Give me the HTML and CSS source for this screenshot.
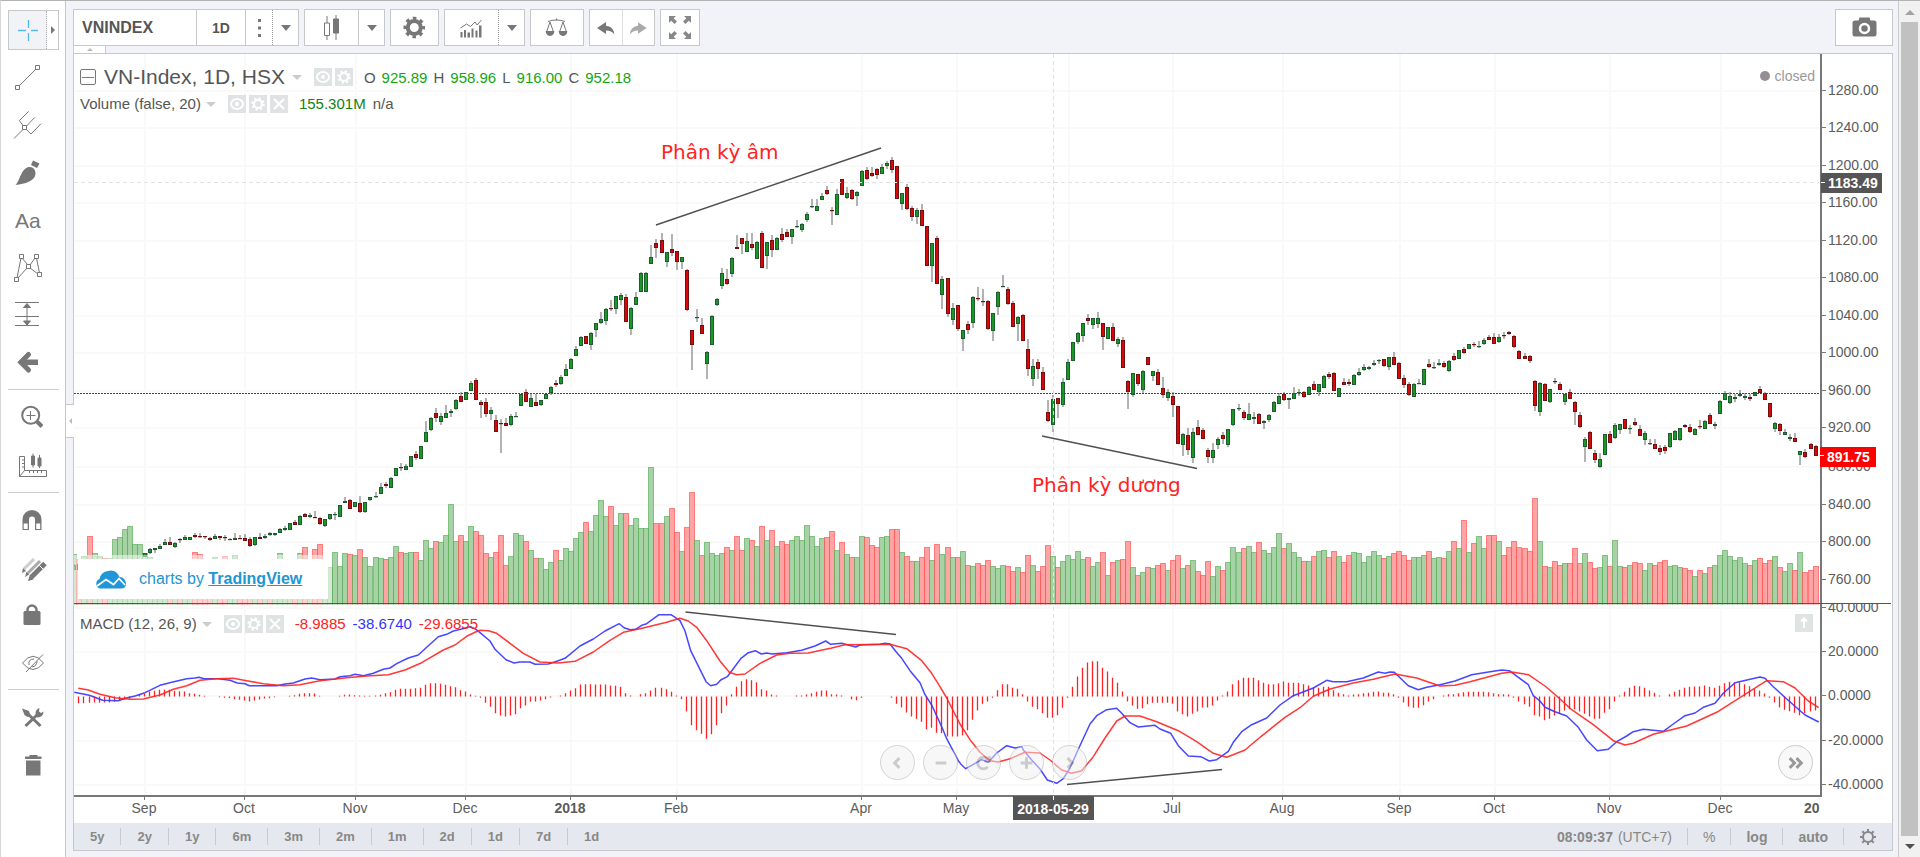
FILE: index.html
```html
<!DOCTYPE html>
<html lang="en">
<head>
<meta charset="utf-8">
<title>VNINDEX</title>
<link rel="stylesheet" href="styles.css">
</head>
<body>
<div class="app">
  <nav class="tools" aria-label="Drawing tools">
    <div class="tool-active">
      <button class="tool-current" aria-label="Cross"><svg class="icon" viewBox="9 11 37 38"><path d="M28.500 20v8M28.500 33v8M18 30.500h8M31 30.500h7" fill="none" stroke="#56b7ee" stroke-width="1.300"/></svg></button>
      <button class="tool-more" aria-label="More cursors"><span class="arrow-right"></span></button>
    </div>
    <button class="tool" aria-label="Trend line"><svg class="icon line" viewBox="8 56 51 47"><path d="M19 86 36 69M35.500 65.500h4v4h-4zM15.500 85.500h4v4h-4z"/></svg></button>
    <button class="tool" aria-label="Pitchfork"><svg class="icon line" viewBox="8 103 51 47"><path d="M14 138.500 23 129.500M26.500 126 34.700 117.500M23.500 126 19.300 120.700 28.700 111.300M26.300 129.500 31 134 41 123.700M22.500 125.500h4v4h-4z"/></svg></button>
    <button class="tool" aria-label="Brush"><svg class="icon solid" viewBox="8 150 51 47"><path d="M15.500 185C20 181 21 168 29 167 33 166.500 36 170 35.500 174 35 181 25 184 15.500 185zM33 160.500 39.500 163.500 37 168 31 165z"/></svg></button>
    <button class="tool" aria-label="Text"><svg class="icon solid" viewBox="8 197 51 47"><text class="tool-text" x="15" y="228">Aa</text></svg></button>
    <button class="tool" aria-label="Pattern"><svg class="icon line" viewBox="8 244 51 47"><path d="M21 258 17 278M22 258 28 265M35 258 30 265M36.500 258 39.500 273M27 268 18 278M30 268 38 274"/><path d="M19.500 254.500h4v4h-4zM34.500 254.500h4v4h-4zM26.500 264.500h4v4h-4zM14.500 277.500h4v4h-4zM37.500 272.500h4v4h-4z"/></svg></button>
    <button class="tool" aria-label="Position"><svg class="icon line" viewBox="8 291 51 47"><path d="M15 302.500h24M15 316.500h24M15 325.500h24M27 304v21"/><path class="solid" d="M27 303.500l3.500 4h-7zM27 325l3.500-4h-7z"/></svg></button>
    <button class="tool" aria-label="Arrow"><svg class="icon" viewBox="8 338 51 47"><path d="M28.500 354.500 21 362.300 28.500 370" fill="none" stroke="#777" stroke-width="5" stroke-linecap="round"/><path class="solid" d="M17.500 362.300 26 354V370zM22 359.500H38v5.500H22z"/></svg></button>
    <hr class="rule">
    <button class="tool" aria-label="Zoom in"><svg class="icon line" viewBox="8 394 51 47"><circle cx="30.700" cy="415.300" r="8.500" stroke-width="2"/><path d="M26.500 415.500h9M30.500 411v9"/><path d="M37 421.500 42 426.500" stroke-width="4"/></svg></button>
    <button class="tool" aria-label="Measure"><svg class="icon line" viewBox="8 441 51 47"><path d="M19.500 456.500h5v14h22v6h-27zM19.500 476.500l5-6M22 460h2M22 463.500h2M22 467h2M29.500 471v2M33.500 471v2M37.500 471v2M41.500 471v2"/><path class="solid" d="M31.500 456h3v9h-3zM33 453.500v14M38 458h3v8h-3zM39.500 455v13"/></svg></button>
    <hr class="rule">
    <button class="tool" aria-label="Magnet"><svg class="icon solid" viewBox="8 497 51 47"><path d="M22.500 530V519.500a9.500 9.500 0 0 1 19 0V530h-6.500V519.500a3 3 0 0 0-6 0V530z"/><path d="M23.700 523.500h4V529h-4zM36.200 523.500h4V529h-4z" fill="#fff"/></svg></button>
    <button class="tool" aria-label="Keep drawing"><svg class="icon" viewBox="8 544 51 47"><g fill="none" stroke-width="3"><path d="M24 569 34 559" stroke="#ccc"/><path d="M27 574 40 561" stroke="#aaa"/><path d="M31 577.500 45 563.500" stroke="#777" stroke-width="5"/></g><path d="M22 573l1-5 3 3zM25 577l1.500-5 2.500 2.500zM28 581l1.500-5 4 3.500z" fill="#777"/><path d="M39.500 565.500l4 4" stroke="#fff"/></svg></button>
    <button class="tool" aria-label="Lock"><svg class="icon solid" viewBox="8 591 51 47"><rect x="23.500" y="611" width="17" height="14" rx="1.500"/><path d="M27.500 612v-2a4.500 4.500 0 0 1 9 0v2" fill="none" stroke="#777" stroke-width="2.500"/></svg></button>
    <button class="tool" aria-label="Hide"><svg class="icon line" viewBox="8 638 51 47"><path d="M22.500 663Q33 649.500 43.500 663 33 676 22.500 663zM43 654.500 26 672M29 665q-1-6 5-6M37 661q0 5-5 6"/></svg></button>
    <hr class="rule">
    <button class="tool" aria-label="Settings"><svg class="icon" viewBox="8 694 51 47"><path d="M28 714 40.500 726M25.500 726 38 714" fill="none" stroke="#777" stroke-width="3"/><path class="solid" d="M22 708.500l7 2.500 1.500 5-3 1-3-2zM36 716q-2-6 3.500-8l-.5 3.500 2 1.500 2.500-1.500q0 5.500-6 6z"/></svg></button>
    <button class="tool" aria-label="Remove"><svg class="icon solid" viewBox="8 741 51 47"><path d="M25 756.500h4.500V755h8v1.500H41.500v2.500H25zM26 760.500h14.500V775.500H26z"/></svg></button>
  </nav>

  <main class="main">
    <header class="toolbar">
      <div class="toolbar-left">
        <div class="join">
          <input class="symbol" type="text" value="VNINDEX" aria-label="Symbol">
          <div class="box">
            <button class="btn interval">1D</button>
            <button class="btn favs" aria-label="Favourites"><svg class="icon solid" viewBox="246 10 26 35"><path d="M258 19h3v3h-3zM258 26.500h3v3h-3zM258 34h3v3h-3z"/></svg></button>
            <button class="btn drop dotted" aria-label="Intervals"><span class="caret"></span></button>
          </div>
        </div>
        <div class="box">
          <button class="btn style" aria-label="Candles"><svg class="icon line" viewBox="305 10 53 35"><path d="M324.500 23h5v12.500h-5zM327 16v7M327 36v4"/><path class="solid" d="M333.500 19h5v14h-5zM336 15v25"/></svg></button>
          <button class="btn drop solid-edge" aria-label="Chart styles"><span class="caret"></span></button>
        </div>
        <button class="box wide" aria-label="Properties"><svg class="icon line" viewBox="391 10 47 35"><circle cx="414.300" cy="27.500" r="6.500" stroke-width="4"/><circle cx="414.300" cy="27.500" r="9.300" stroke-width="3" stroke-dasharray="3.600 3.704" stroke-dashoffset="1.800"/></svg></button>
        <div class="box">
          <button class="btn style" aria-label="Indicators"><svg class="icon line" viewBox="445 10 52 35"><path d="M460 28 466 24 470 26.500 474.500 22 476.500 25 481 20"/><path class="solid" stroke="none" d="M460 32h2v5.500h-2zM463.500 30h2v7.500h-2zM467 32.500h2.500v5H467zM471 28.500h2v9h-2zM475 30.500h2v7h-2zM478.500 25.500h2.500v12h-2.500z"/></svg></button>
          <button class="btn drop dotted" aria-label="Favourite indicators"><span class="caret"></span></button>
        </div>
        <button class="box compare" aria-label="Compare"><svg class="icon line" viewBox="530 10 52 35"><path d="M547 21.500q4-1.500 8.500-1.500t8.500 1.500M555.500 18.500v2M549 22 545.500 32M549 22 552.500 32M562 22 558.500 32M562 22 565.500 32"/><path class="solid" d="M545 31.500h8q-.5 4-4 4t-4-4zM558 31.500h8q-.5 4-4 4t-4-4z"/></svg></button>
        <div class="box undo">
          <button class="btn half" aria-label="Undo"><svg class="icon solid" viewBox="589 10 32 35"><path d="M596 28 605 22v3.800q7.500.7 8.500 8.700-3-4-8.500-4V34z"/></svg></button>
          <button class="btn half redo" aria-label="Redo"><svg class="icon" viewBox="621 10 32 35"><path fill="#aaa" d="M645.500 28 636.500 22v3.800q-7.500.7-8.500 8.700 3-4 8.500-4V34z"/></svg></button>
        </div>
        <button class="box full" aria-label="Fullscreen"><svg class="icon" viewBox="661 10 38 35"><path fill="#888" d="M669 16h7l-2.300 2.300 3.300 3.300-2.500 2.500-3.300-3.300L669 23zM691 16h-7l2.300 2.300-3.300 3.300 2.500 2.500 3.300-3.300L691 23zM669 39h7l-2.300-2.300 3.300-3.300-2.500-2.500-3.300 3.300L669 32zM691 39h-7l2.300-2.300-3.300-3.300 2.500-2.500 3.300 3.300L691 32z"/></svg></button>
      </div>
      <button class="box camera" aria-label="Take a snapshot"><svg class="icon solid" viewBox="1836 10 56 35"><path d="M1855 20.500h3.500l1-3h10l1 3h3.500a2.500 2.500 0 0 1 2.500 2.500v11a2.500 2.500 0 0 1-2.500 2.500h-19a2.500 2.500 0 0 1-2.500-2.500v-11a2.500 2.500 0 0 1 2.500-2.500z"/><circle cx="1864.500" cy="28.500" r="4.500" stroke="#fff" stroke-width="2.500"/></svg></button>
    </header>

    <div class="tab-strip"><button class="tab-top" aria-label="Hide toolbar"></button></div>
    <section class="frame">
      <button class="tab-side" aria-label="Hide drawing tools"></button>
      <div class="chart">
        <svg class="plot" id="plot" viewBox="74 54 1818 769" role="img" aria-label="VN-Index price, volume and MACD"></svg>

        <div class="legend legend-main">
          <div class="row row-title">
            <button class="fold" aria-label="Collapse"></button>
            <span class="title">VN-Index, 1D, HSX</span><span class="caret pale"></span>
            <span class="minis"><button class="mini" aria-label="Hide"><svg viewBox="0 0 18 18"><use href="#eye"/></svg></button><button class="mini" aria-label="Format"><svg viewBox="0 0 18 18"><use href="#cog"/></svg></button></span>
            <span class="ohlc"><span>O</span><b>925.89</b><span>H</span><b>958.96</b><span>L</span><b>916.00</b><span>C</span><b>952.18</b></span>
          </div>
          <div class="row row-study">
            <span>Volume (false, 20)</span><span class="caret pale"></span>
            <span class="minis"><button class="mini" aria-label="Hide"><svg viewBox="0 0 18 18"><use href="#eye"/></svg></button><button class="mini" aria-label="Format"><svg viewBox="0 0 18 18"><use href="#cog"/></svg></button><button class="mini" aria-label="Remove"><svg viewBox="0 0 18 18"><use href="#ex"/></svg></button></span>
            <span class="vol">155.301M</span><span>n/a</span>
          </div>
        </div>

        <div class="status"><i class="dot"></i>closed</div>

        <div class="brand">
          <svg class="cloud" viewBox="0 0 31 19"><path fill="#2196d8" d="M5 18.500A5 5 0 0 1 4.500 9 10 10 0 0 1 13 1q8-2 11.500 6 6 .500 6.500 6.500 0 5-5 5z"/><path d="M2 16 11 9.500l7.500 5L24 8.500 30 15" fill="none" stroke="#fff" stroke-width="1.800"/></svg>
          <span>charts by <a href="#">TradingView</a></span>
        </div>

        <div class="legend legend-macd">
          <div class="row row-study">
            <span>MACD (12, 26, 9)</span><span class="caret pale"></span>
            <span class="minis"><button class="mini" aria-label="Hide"><svg viewBox="0 0 18 18"><use href="#eye"/></svg></button><button class="mini" aria-label="Format"><svg viewBox="0 0 18 18"><use href="#cog"/></svg></button><button class="mini" aria-label="Remove"><svg viewBox="0 0 18 18"><use href="#ex"/></svg></button></span>
            <span class="red">-8.9885</span><span class="blue">-38.6740</span><span class="red">-29.6855</span>
          </div>
        </div>
        <button class="mini move-up" aria-label="Move up"><svg viewBox="0 0 18 18"><path d="M9 14V5M6 7.500 9 4.500l3 3" fill="none" stroke="#fff" stroke-width="2"/></svg></button>

        <div class="nav">
          <button class="round" aria-label="Scroll left"><svg viewBox="0 0 34 34"><path d="M19 12l-5 5 5 5"/></svg></button>
          <button class="round" aria-label="Zoom out"><svg viewBox="0 0 34 34"><path d="M12 17h11"/></svg></button>
          <button class="round" aria-label="Reset"><svg viewBox="0 0 34 34"><path d="M21.500 21a6 6 0 1 1 0-8M23 10v5h-5"/></svg></button>
          <button class="round" aria-label="Zoom in"><svg viewBox="0 0 34 34"><path d="M11 17h12M17 11v12"/></svg></button>
          <button class="round" aria-label="Scroll right"><svg viewBox="0 0 34 34"><path d="M15 12l5 5-5 5"/></svg></button>
        </div>
        <button class="round latest" aria-label="Scroll to latest"><svg viewBox="0 0 34 34"><path d="M11 12l5 5-5 5M18 12l5 5-5 5"/></svg></button>
      </div>

      <footer class="footer">
        <div class="cells"><button>5y</button><button>2y</button><button>1y</button><button>6m</button><button>3m</button><button>2m</button><button>1m</button><button>2d</button><button>1d</button><button>7d</button><button>1d</button></div>
        <div class="cells cells-right"><button>08:09:37 <span class="zone">(UTC+7)</span></button><button class="percent">%</button><button>log</button><button>auto</button><button aria-label="Scale settings"><svg class="sun" viewBox="0 0 18 18"><circle cx="9" cy="9" r="5"/><path d="M9 1v3M9 14v3M1 9h3M14 9h3M3.300 3.300l2.200 2.200M12.500 12.500l2.200 2.200M3.300 14.700l2.200-2.200M12.500 5.500l2.200-2.200"/></svg></button></div>
      </footer>
    </section>
  </main>

  <aside class="scroll" aria-hidden="true"><span class="scroll-up"></span><span class="thumb"></span><span class="scroll-down"></span></aside>
</div>

<svg class="defs" aria-hidden="true"><defs>
  <g id="eye"><ellipse cx="9" cy="9" rx="6" ry="5" fill="none" stroke="#fff" stroke-width="2"/><circle cx="9" cy="9" r="2" fill="#fff"/></g>
  <g id="cog" fill="none" stroke="#fff"><circle cx="9" cy="9" r="4" stroke-width="2"/><circle cx="9" cy="9" r="5.700" stroke-width="2" stroke-dasharray="2.200 2.277"/></g>
  <g id="ex"><path d="M4 4l10 10M14 4 4 14" stroke="#fff" stroke-width="2"/></g>
</defs></svg>
<script src="chart.js"></script>
</body>
</html>
```
FILE: styles.css
```css
* { box-sizing: border-box; }
body { margin: 0; font-family: "Liberation Sans", Arial, sans-serif; color: #555; background: #f1f3f8; }
button, input { font: inherit; color: inherit; margin: 0; padding: 0; border: 0; background: none; border-radius: 0; }
button { display: flex; align-items: center; justify-content: center; }
.defs { position: absolute; width: 0; height: 0; }
.app { display: flex; min-height: 100vh; border-top: 1px solid #b3b3b3; border-left: 1px solid #d8d8d8; }
.icon { display: block; width: 100%; height: 100%; }
.line { fill: none; stroke: #777; }
.solid { fill: #777; }

.tools { flex: none; width: 65px; padding: 9px 6px 0 7px; background: #fff; border-right: 1px solid #c6c6c6; }
.tool-active { display: flex; height: 40px; margin-bottom: 6px; border: 1px solid #c6c8ca; }
.tool-current { width: 38px; background: #f2f3f6; border-right: 1px dotted #aaa; }
.tool-more { flex: 1; }
.arrow-right { border: 4px solid transparent; border-left-color: #777; border-right: 0; }
.tool { width: 51px; height: 47px; }
.tool-text { font-size: 21px; }
.rule { height: 1px; margin: 4px 0; border: 0; background: #ccc; }

.main { flex: 1; min-width: 0; display: flex; flex-direction: column; padding: 8px 5px 6px 7px; }
.toolbar { display: flex; justify-content: space-between; height: 37px; }
.toolbar-left { display: flex; gap: 5px; }
.join { display: flex; }
.symbol { width: 124px; padding: 0 8px; border: 1px solid #c6c8ca; background: #fff; font-size: 16px; font-weight: bold; margin-right: -1px; }
.box { display: flex; border: 1px solid #c6c8ca; background: #fff; }
.btn { height: 35px; }
.interval { width: 48px; font-size: 14px; font-weight: bold; }
.favs { width: 27px; border-left: 1px solid #c6c8ca; }
.drop { width: 26px; }
.dotted { border-left: 1px dotted #999; }
.solid-edge { border-left: 1px solid #c6c8ca; }
.style { width: 53px; }
.wide { width: 49px; }
.compare { width: 54px; }
.half { width: 32px; }
.undo { width: 66px; }
.redo { border-left: 1px solid #ddd; }
.full { width: 40px; }
.camera { width: 58px; }
.caret { flex: none; border: 5px solid transparent; border-top: 6px solid #777; border-bottom: 0; }
.pale { border-top: 5px solid #ccc; }
.tab-strip { height: 7px; }
.tab-top { width: 33px; height: 7px; background: #fff; border: 1px solid #ccc; border-width: 0 1px; }
.tab-top::after { content: ""; border: 3px solid transparent; border-bottom-color: #bbb; border-top: 0; }

.frame { position: relative; flex: 1; display: flex; flex-direction: column; border: 1px solid #c6c8ca; background: #fff; }
.tab-side { position: absolute; left: -8px; top: 44%; width: 8px; height: 34px; background: #fff; border: 1px solid #c6c8ca; border-width: 1px 0; }
.tab-side::after { content: ""; border: 3px solid transparent; border-right-color: #bbb; border-left: 0; }
.chart { position: relative; flex: 1; }
.plot { display: block; width: 100%; }

.legend { position: absolute; left: 6px; font-size: 15px; line-height: 18px; }
.legend-main { top: 14px; }
.legend-macd { top: 561px; }
.row { display: flex; align-items: center; white-space: nowrap; height: 18px; }
.row-title { margin-bottom: 9px; }
.fold { width: 16px; height: 16px; margin-right: 8px; border: 1px solid #777; border-radius: 2px; }
.fold::after { content: ""; width: 12px; height: 1px; background: #777; }
.title { font-size: 21px; line-height: 18px; margin-right: 7px; }
.minis { display: flex; gap: 3px; margin: 0 11px 0 12px; }
.row-study .caret { margin-left: 5px; }
.vol { color: #128212; margin-right: 7px; }
.mini { width: 18px; height: 18px; background: #e0e3e3; }
.mini svg { width: 18px; height: 18px; }
.ohlc { display: flex; gap: 6px; padding-top: 2px; }
.ohlc b { font-weight: normal; color: #14a514; }
.red { color: #f22; margin-right: 7px; }
.blue { color: #33f; margin-right: 7px; }
.status { position: absolute; right: 77px; top: 13px; display: flex; align-items: center; gap: 5px; font-size: 14px; line-height: 18px; color: #999; }
.dot { width: 10px; height: 10px; border-radius: 50%; background: #958f92; }
.brand { position: absolute; left: 0; top: 501px; display: flex; align-items: center; gap: 13px; width: 258px; height: 48px; padding-left: 17px; border: 4px solid rgba(255,255,255,.5); background: #fff; background-clip: padding-box; font-size: 16px; color: #2196d3; }
.brand a { color: inherit; font-weight: bold; }
.cloud { width: 31px; height: 19px; }
.move-up { position: absolute; right: 79px; top: 560px; }
.nav { position: absolute; left: 0; right: 0; top: 691px; display: flex; justify-content: center; gap: 8px; opacity: .5; }
.round { width: 35px; height: 35px; border: 1px solid #aaa; border-radius: 50%; background: #f1f1f1; }
.round svg { width: 34px; height: 34px; fill: none; stroke: #999; stroke-width: 3; }
.latest { position: absolute; right: 79px; top: 691px; border-color: #ccc; background: #f8f8f8; }

.footer { display: flex; justify-content: space-between; height: 27px; background: #e5e8ee; color: #888; font-size: 13px; font-weight: bold; }
.cells { display: flex; align-items: center; }
.cells button { height: 17px; padding: 0 16px; }
.cells button + button { border-left: 1px solid #c8cacd; }
.cells-right { font-size: 14px; }
.cells-right button { padding: 0 15px; }
.zone, .percent { font-weight: normal; }
.zone { margin-left: 5px; }
.sun { width: 18px; height: 18px; fill: none; stroke: #888; stroke-width: 2; }

.scroll { flex: none; width: 22px; display: flex; flex-direction: column; align-items: center; background: #f1f1f1; border-left: 1px solid #ccc; }
.scroll-up { margin: 9px 0 7px; border: 5px solid transparent; border-bottom-color: #a3a3a3; border-top: 0; }
.thumb { flex: 1; width: 17px; background: #c1c1c1; }
.scroll-down { margin: 8px 0; border: 5px solid transparent; border-top-color: #505050; border-bottom: 0; }

.grid { stroke: #f9f9f9; stroke-width: 2; fill: none; }
.axis { stroke: #777; stroke-width: 2; fill: none; }
.tick { stroke: #777; }
.split { stroke: #555; }
.cross { stroke: #e2e2e2; stroke-dasharray: 4 3; fill: none; }
.last { stroke: #e00; stroke-dasharray: 2 1; }
.label { font-size: 14px; fill: #5c5c5c; }
.mid { text-anchor: middle; }
.strong { font-weight: bold; }
.tag-text { font-size: 14px; font-weight: bold; fill: #fff; }
.vg { fill: #a6d2a6; stroke: #4aa54a; stroke-opacity: .6; }
.vr { fill: #ffa4a4; stroke: #ff4040; stroke-opacity: .6; }
.wick { stroke: #666; fill: none; }
.cg { fill: #169a22; stroke: #1f5a30; }
.cr { fill: #d80808; stroke: #701010; }
.hist { stroke: #f22; fill: none; stroke-width: 1.3px; }
.macd { stroke: #33f; fill: none; stroke-width: 1.5px; stroke-opacity: .9; stroke-linejoin: round; }
.signal { stroke: #f22; fill: none; stroke-width: 1.5px; stroke-opacity: .9; stroke-linejoin: round; }
.trend { stroke: #505050; stroke-width: 1.5px; fill: none; }
.note { font-family: "DejaVu Sans", Verdana, sans-serif; font-size: 20px; fill: #f22; }
```
FILE: chart.js
```js
// Values in each block are thirds of a pixel, measured down from the block's base line.
const SUB = 3;
const xOf = i => Math.round(144.7 + 5.0175 * i);

// Candles: direction, body top, body bottom, high, low.
const candles = [
  [280, -14, `g 855 869 852 869
r 852 870 850 870`],
  [280, 0, `g 820 832 820 832
g 808 819 804 822
g 804 809 804 818
g 797 808 793 808
g 786 796 778 796
r 786 796 770 796
g 790 802 786 804
r 777 780 774 788
g 770 781 766 781
g 770 780 770 780
r 764 770 759 774
r 767 770 760 773
r 767 772 767 778
r 773 780 770 782
g 767 777 762 777
r 767 774 767 781
r 770 775 766 782
g 776 779 773 781
g 774 780 760 781
r 773 776 764 778
r 774 784 763 784
r 777 797 772 801
g 770 796 770 797
r 771 776 760 776
g 768 773 762 777
g 760 765 756 768
g 760 766 760 769
g 748 758 744 758
g 745 749 737 752
g 729 750 729 750
r 725 736 721 736
g 707 736 706 736
r 702 712 698 712
g 706 710 698 713
r 710 712 692 713
r 714 731 711 734
g 718 738 718 742
g 703 717 703 721
g 703 706 695 720
g 674 710 674 710
g 663 668 651 668
r 661 687 657 687
g 667 680 667 681
r 670 697 648 698
g 667 697 667 698
g 651 661 651 664
g 647 650 635 653
g 621 641 608 641
r 613 618 605 623
g 594 623 591 623
g 564 589 564 589`],
  [220, 51, `r 741 744 730 753
g 738 750 732 750
g 707 742 707 742
r 703 713 692 719
g 677 716 677 716
g 635 667 602 667
g 595 630 592 633
r 580 593 565 607
g 587 605 580 615
g 580 593 554 595
g 573 578 566 590
g 539 567 537 570
r 527 547 517 547
g 516 541 516 541
g 489 514 482 514
r 481 541 475 541
r 546 555 541 593
r 546 582 535 592
g 571 581 560 601
r 601 637 584 637
r 609 612 598 698
r 609 619 595 619
g 587 615 583 618
g 588 592 576 592
g 523 558 523 558
r 516 545 508 545
g 535 562 522 562
r 546 559 522 559
g 539 555 539 558
g 523 537 520 537
g 501 518 498 524
r 489 495 481 502
g 471 492 464 495
g 448 469 433 469
g 418 446 415 446
g 388 409 377 409
g 352 379 349 379
r 347 372 347 372
g 340 375 337 390
g 310 330 310 352
g 298 308 275 312
g 268 303 264 315
r 264 267 241 274
g 227 266 227 281
g 226 240 219 255
r 230 307 223 307
g 265 326 262 345
g 230 254 215 254
g 158 217 155 217
g 158 217 155 217
g 111 131 76 131
r 69 83 58 113
r 61 98 39 98
g 97 125 97 142
r 88 98 43 109
r 92 127 92 150
g 110 127 110 146
r 151 270 148 272
r 331 376 331 450
g 290 293 267 307
r 316 342 294 342
g 396 431 394 476
g 287 375 285 375
g 238 254 234 257
g 159 199 144 206
r 178 192 148 195
g 114 161 112 172
r 81 87 46 87
r 55 72 53 101
g 62 97 39 97
r 72 83 39 90
g 66 116 63 118
r 39 143 32 143
g 66 109 66 146
r 61 91 46 112
g 55 90 52 90
r 43 60 24 67
r 35 52 28 52
g 28 52 28 71`],
  [120, 130, `g 317 322 300 325
g 313 329 310 337
g 283 299 275 307
g 257 262 238 265
g 257 273 238 273
g 227 239 220 241
r 211 222 197 225
r 270 273 262 315
g 223 285 208 285
r 178 225 178 225
g 219 233 200 236
r 211 237 208 239
g 216 229 213 259
g 152 198 150 198
r 151 177 140 180
r 159 168 140 170
r 148 165 145 176
g 141 161 133 161
g 129 137 123 146
r 121 150 110 160
r 137 236 137 236
g 219 251 219 270
r 200 267 193 270
r 265 290 257 303
g 271 290 265 311
r 271 319 253 319
r 317 439 317 439
g 370 438 368 485
r 353 491 347 491
g 478 526 467 567
r 475 582 473 592
g 563 600 549 614
r 556 627 554 632
g 631 656 629 694
r 613 631 602 641
g 531 608 529 623
r 534 537 500 543
r 542 547 508 558
r 542 627 540 629
g 579 633 579 664
g 516 562 514 585
g 497 502 466 502
r 508 552 501 556
r 549 620 543 620
g 591 612 589 664
r 584 663 582 663
r 688 746 658 768
g 737 776 718 799
r 725 746 718 776
r 755 810 740 811
r 875 902 841 907
g 838 915 825 936
r 835 852 835 893
g 786 856 774 860
g 726 779 718 780
g 666 724 666 724
g 639 667 635 671
g 609 648 608 667
r 594 604 583 614
g 594 615 594 627
g 595 612 575 623
r 609 650 609 690
g 621 656 620 657
r 620 664 608 664
g 658 671 652 682
r 661 743 652 743
r 782 815 780 867
g 760 825 760 830
r 763 793 763 798
g 752 811 751 818
r 710 736 710 736
g 752 769 752 783
r 755 795 748 795
r 804 826 770 833
g 816 833 808 843
r 829 856 816 892`],
  [280, 206, `r 377 492 377 492
g 463 495 460 529
r 466 511 444 525
g 456 533 444 548
r 441 465 421 465
r 451 477 444 477
r 511 530 503 548
g 511 533 489 548
g 477 496 472 506
r 466 477 455 491
g 448 496 448 500
g 388 435 388 437
g 384 387 373 393
r 395 414 389 419
g 403 420 368 420
g 411 416 395 431
r 403 431 400 433
g 422 428 420 446
g 406 421 402 425
g 366 395 364 397
g 347 371 340 373
r 342 360 335 362
g 355 360 353 387
g 340 356 320 357
g 336 340 328 348
r 337 350 332 353
g 321 346 319 346
r 313 331 302 331
g 313 335 311 349
g 287 323 285 325
r 283 290 275 296
r 279 334 276 334
g 325 352 324 352
r 306 316 294 316
r 306 311 298 318
g 284 315 282 315
g 276 285 264 287
g 261 270 253 274
g 261 268 257 271
g 249 255 241 257
g 239 243 237 251
r 238 259 238 260
g 231 262 231 270
r 231 255 215 255
r 249 297 246 298
r 294 314 284 323
r 313 345 305 348
g 313 352 309 352
g 308 312 297 312
g 268 315 268 316
r 253 262 237 264
g 260 263 246 267
g 249 255 238 257
r 249 262 242 263
g 242 273 239 275
r 227 239 220 242
g 211 236 209 237
r 208 218 200 222
g 193 206 191 208
r 192 195 185 200
g 197 202 182 204
g 181 191 175 195
r 171 180 166 180
r 171 191 158 193
g 171 187 163 189
r 166 169 155 177
r 155 162 153 166
r 167 202 165 204
r 214 236 209 238
r 227 236 220 238
r 227 244 225 248
r 302 379 300 394
g 309 397 307 408
r 313 363 309 363
g 328 367 328 368
r 302 307 294 312
r 313 330 305 331
g 343 367 341 376
r 336 356 328 357
r 367 397 363 436
r 406 442 395 443
g 478 502 471 547
r 457 506 453 507
r 519 541 511 549
g 538 562 519 563
g 463 524 461 526
r 463 488 452 488
g 436 475 430 476
g 433 449 433 461
r 418 446 417 447
g 444 447 436 462
r 425 434 414 438
r 448 468 436 469
g 458 480 452 496
g 489 493 478 496
r 493 506 478 508
r 504 517 496 525
r 500 514 496 521
g 460 502 458 503
g 453 480 451 480
g 445 480 444 484
r 436 440 432 444
r 441 457 433 459
g 447 465 445 466
r 437 442 421 446
g 423 446 421 447
r 406 431 400 432
g 433 439 425 446
g 362 401 360 402
g 340 360 334 360
g 347 369 335 371
g 350 356 341 367
g 342 349 331 350
g 349 353 340 361
r 351 357 341 363
g 335 349 335 349
r 328 339 317 340
r 338 360 336 361
r 369 412 368 413
g 429 446 425 457
r 433 454 430 466
g 456 464 446 466
g 472 476 463 484
r 474 485 459 486
g 513 525 512 555
r 515 532 508 533
r 492 506 490 507
r 497 528 496 529`]
];

// Volume bars: direction and bar top.
const volumes = [
  [280, -14, 'g823 r838 g828 r767 g820 g828 r833 g833 g778 g772 g748 g738 g793 g793 g820 g831 g850 g850 g850 r850 g850 r850 g850 g850 r815 r823 r836 r840 g832 r838 r828 g840 g824 r838 r838 r840 g840 r840 g840 r840 g840 g820 g840 g840 r840 g820 r800 g838 r808 r793 g845 g862 g816 g857 g820 r823 g826 r808 g832 g858 g832 g834 r838 g831 g797'],
  [220, 51, 'r997 g1000 g997 r997 g1020 g959 g985 r962 g967 g944 g853 g962 r944 g962 g917 r933 r944 r1000 g1012 r997 r944 r1034 g1008 g940 g944 r962 g989 r1015 g1015 g1046 g1026 r989 g1020 g985 g993 g955 g937 r906 g933 g884 g839 g888 r857 g914 g880 r880 g914 g895 g925 g925 g741 r910 r910 g888 r865 r937 g993 r921 r816 g959 r1004 g967 g1000 g1004 g1000 r982 g989 r948 r989 g955 r959 g978 r917 g959 r929 g978'],
  [120, 127, 'r1264 r1271 g1259 g1248 g1259 g1215 g1248 g1278 g1255 r1252 r1233 g1289 r1267 g1301 r1312 g1312 g1248 r1252 r1274 r1282 g1252 g1248 r1226 r1226 g1297 r1308 r1323 g1323 r1312 r1282 g1319 r1271 g1301 r1282 g1312 r1312 g1293 r1334 g1338 r1330 r1334 r1319 g1338 g1345 g1334 r1338 r1353 g1342 r1357 r1304 g1334 r1353 r1338 r1274 g1308 r1342 g1323 g1304 g1316 g1293 g1316 r1312 g1338 g1327 r1297 g1364 r1327 g1319 r1316 r1263 g1342 r1364 g1357 r1342 g1345 r1334 r1330 g1349 r1319'],
  [280, 206, 'r824 g865 r854 g839 r873 r884 r843 g888 g858 r869 g847 g801 g816 r805 g798 g816 r786 g809 g820 g801 g760 r805 g790 g816 g832 r843 g843 r828 g813 g809 r832 r813 g828 r847 r824 g816 g820 g847 g828 g813 g824 r835 g828 r820 r813 r824 r839 g832 g832 g824 r813 g835 g832 r835 g813 r783 g805 r719 g816 r790 g768 g805 r764 r764 g783 r824 r801 r783 r801 r805 r813 r655 g783 r857 g862 r843 r854 g850 r850 r805 r850 g820 r847 r865 g862 g824 r857 g779 g857 r862 g854 r847 r850 g869 g850 r854 r847 r839 g857 g854 g862 r865 r869 g888 r869 g880 r862 g854 g824 g809 g828 g839 g832 g850 r854 g839 r835 r850 r839 g828 r862 g873 g850 r869 g817 r877 r869 r857']
];

// MACD histogram heights, starting at index -13.
const histogram = [-20,-20,-19,-18,-19,-18,-18,-16,-12,-9,-6,0,5,8,15,17,20,20,20,17,16,15,10,8,5,2,0,0,-2,-4,-5,-8,-10,-12,-15,-12,-9,-6,-5,-2,0,0,2,4,8,10,10,9,2,0,0,0,2,5,6,4,3,2,2,3,5,10,13,20,23,23,23,25,26,35,40,40,38,35,31,28,19,15,6,
2,-4,-19,-31,-50,-57,-60,-57,-53,-35,-27,-16,-15,-12,-8,-3,0,3,10,18,25,36,37,37,36,36,36,33,32,29,10,3,0,7,10,18,26,26,22,14,3,-8,-45,-86,-101,-112,-127,-113,-86,-50,-27,7,29,46,52,49,43,22,18,6,3,0,0,0,3,3,6,10,14,18,18,7,6,3,0,-8,-11,-4,0,0,0,0,0,-4,-22,-33,-48,-60,-67,-76,-98,-94,-109,-110,-120,-120,-120,
-116,-101,-70,-42,-22,-15,-4,19,37,37,26,23,7,-15,-31,-38,-50,-64,-64,-56,-34,-4,29,60,86,102,106,106,86,75,56,41,15,-15,-27,-37,-35,-23,-19,-19,-19,-19,-22,-45,-53,-60,-52,-45,-33,-33,-27,-12,3,15,37,49,56,56,56,49,41,37,37,40,45,41,41,41,37,33,26,26,29,29,19,11,7,3,6,7,10,11,14,15,11,11,7,-4,-18,-30,-34,-34,-26,-15,-8,
0,3,7,7,10,13,14,14,14,14,13,10,7,7,6,-4,-15,-23,-31,-56,-60,-71,-67,-57,-52,-42,-38,-38,-45,-52,-60,-67,-67,-49,-38,-15,3,14,26,32,31,26,18,11,3,0,7,14,20,26,29,30,30,33,29,26,32,40,44,42,42,37,31,23,18,9,-4,-18,-33,-40,-44,-49,-56,-50,-45,-42];

// Lines: origin x, origin y, points in thirds of a pixel.
const macd = [
  [0, 560, '223,397 268,406 308,421 355,422 376,415 405,408 435,398 480,376 515,367 560,356 585,354 597,352 612,356 655,356 690,361 712,369 735,371 748,377 830,377 855,372 880,369 915,357 935,354 960,359 1005,357 1020,350 1050,347 1065,343 1090,347 1120,340 1150,328 1170,324 1190,311 1225,294 1255,285 1280,262 1315,230 1340,223 1360,213 1385,207 1410,200 1425,206'],
  [480, 590, '0,128 30,153 45,178 78,209 102,219 120,216 150,216 165,223 205,222 235,212 255,205 300,168 340,147 375,123 418,101 432,113 450,119 467,118 485,106 500,101 537,74 573,74 600,92 615,123 632,182 678,275 692,287 710,283 722,270 742,260 782,206 805,188 826,182 844,192 860,189 876,192 920,188 965,181 1005,168 1037,153 1052,163 1085,160 1127,171 1140,165 1200,163 1215,160 1230,162 1247,184 1265,205 1290,242 1320,278 1335,314 1355,345 1385,410 1400,446 1435,512'],
  [960, 590, '3,523 17,536 65,509 85,517 110,489 140,467 165,474 185,470 190,480 215,510 240,537 262,570 290,580 310,566 330,534 355,478 390,402 410,377 440,359 470,355 485,370 510,398 535,411 585,406 600,417 632,430 655,467 685,498 722,500 748,513 770,509 805,484 820,457 845,425 875,404 920,384 960,345 1000,317 1060,294 1100,271 1120,275 1160,275 1210,264 1255,246 1275,250 1290,246 1303,247 1345,287 1375,299 1400,292'],
  [1440, 590, '0,284 45,273 95,254 150,245 185,240 208,242 265,284 280,317 300,333 315,352 345,365 380,378 415,412 440,450 472,482 505,478 530,455 560,438 580,425 610,418 670,424 700,402 735,377 765,369 790,352 825,340 850,310 885,278 960,261 975,265 1000,290 1040,327 1095,375 1136,396']
];
const signal = [
  [0, 560, '235,385 265,390 300,403 345,413 390,418 430,417 480,405 520,388 560,377 600,361 650,356 700,355 740,362 790,371 850,377 900,374 960,362 1040,353 1100,348 1165,344 1215,330 1265,308 1330,270 1365,255 1400,229 1425,217'],
  [480, 590, '0,121 25,122 50,130 90,160 130,190 180,216 235,219 285,214 340,186 390,151 430,127 480,116 560,97 600,85 625,93 650,112 680,152 720,213 748,247 770,254 795,252 840,220 890,195 930,190 985,189 1055,174 1095,164 1230,163 1280,176 1325,212 1355,250 1380,290 1400,324'],
  [960, 590, '0,402 30,449 60,487 90,512 115,516 150,506 195,487 240,489 270,510 305,540 335,550 365,542 400,500 435,444 470,393 495,378 540,378 590,395 655,422 710,455 760,490 800,502 855,480 900,442 975,382 1020,353 1060,319 1110,297 1180,279 1240,268 1305,252 1370,264 1420,281'],
  [1440, 590, '0,288 45,286 90,275 185,250 215,246 265,254 315,288 350,318 395,359 460,404 520,452 555,465 580,460 640,433 740,408 830,367 915,313 980,272 1030,275 1065,294 1105,333 1136,353']
];

const priceTicks = [[1280,91],[1240,128],[1200,166],[1160,203],[1120,241],[1080,278],[1040,316],[1000,353],[960,391],[920,428],[880,467],[840,505],[800,542],[760,580]];
const macdTicks = [[40,608],[20,652],[0,696],[-20,741],[-40,785]];
const months = [['Sep',144],['Oct',244],['Nov',355],['Dec',465],['2018',570],['Feb',676],['Apr',861],['May',956],['',1068],['Jul',1172],['Aug',1282],['Sep',1399],['Oct',1494],['Nov',1609],['Dec',1720]];

const path = (cls, d) => `<path class="${cls}" d="${d}"/>`;
const text = (cls, x, y, s) => `<text class="${cls}" x="${x}" y="${y}">${s}</text>`;
const polyline = (cls, blocks) => `<polyline class="${cls}" points="${blocks.map(([ox, oy, pts]) =>
  pts.split(' ').map(p => { const [x, y] = p.split(','); return (ox + x / SUB).toFixed(1) + ',' + (oy + y / SUB).toFixed(1); }).join(' ')).join(' ')}"/>`;

let out = '<defs><clipPath id="lower"><rect x="74" y="604" width="1818" height="192"/></clipPath><clipPath id="area"><rect x="74" y="54" width="1746" height="742"/></clipPath></defs>';

out += path('grid', priceTicks.concat(macdTicks).map(t => `M74 ${t[1]}H1819`).join('') + months.map(m => `M${m[1] + 1} 54V795`).join(''));

out += '<g clip-path="url(#area)">';
for (const [base, start, rows] of volumes) {
  rows.split(' ').forEach((v, k) => {
    const y = Math.round(base + v.slice(1) / SUB) + 0.5;
    out += `<rect class="v${v[0]}" x="${xOf(start + k) - 2.5}" y="${y}" width="5" height="${604 - y}"/>`;
  });
}
for (const [base, start, rows] of candles) {
  rows.split('\n').forEach((row, k) => {
    const [dir, ...n] = row.split(' ');
    const [top, bottom, high, low] = n.map(v => Math.round(base + v / SUB));
    const x = xOf(start + k);
    out += path('wick', `M${x} ${high}V${low}`);
    out += `<rect class="c${dir}" x="${x - 1.5}" y="${top + 0.5}" width="3" height="${Math.max(bottom - top - 1, 0.2)}"/>`;
  });
}
out += path('hist', histogram.map((h, k) => h ? `M${xOf(k - 13) - 0.5} 696.500V${(696.5 - h / SUB).toFixed(1)}` : '').join(''));
out += polyline('macd', macd) + polyline('signal', signal) + '</g>';

out += path('last', 'M74 393.500H1819') + path('cross', 'M74 182.500H1819M1053.500 54V795');
out += path('trend', 'M656 225 881 148M1042 436 1197 468.500M685.500 612 896 634.500M1067 784.500 1222 769.500');
out += text('note', 661, 159, 'Phân kỳ âm') + text('note', 1032, 492, 'Phân kỳ dương');

out += path('axis', 'M1821 54V796M74 796H1822') + path('split', 'M74 603.500H1891');
for (const [v, y] of priceTicks) out += path('tick', `M1821 ${y - 0.5}h5`) + text('label', 1828, y + 4, v.toFixed(2));
out += '<g clip-path="url(#lower)">';
for (const [v, y] of macdTicks) out += path('tick', `M1821 ${y - 0.5}h5`) + text('label', 1828, y + 4, v.toFixed(4));
out += '</g>';
for (const [m, x] of months) out += path('tick', `M${x + 0.5} 796v4`) + text('label mid' + (m === '2018' ? ' strong' : ''), x, 813, m);
out += text('label strong', 1804, 813, '20');

out += '<rect x="1821" y="173" width="61" height="20" fill="#555"/>' + text('tag-text', 1828, 188, '1183.49') + path('', 'M1821 182.500h4" stroke="#fff');
out += '<rect x="1820" y="447" width="56" height="20" fill="#f00"/>' + text('tag-text', 1827, 462, '891.75') + path('', 'M1820 455.500h4" stroke="#fff');
out += '<rect x="1013" y="796" width="81" height="24" fill="#555"/>' + text('tag-text mid', 1053, 814, '2018-05-29') + path('', 'M1053.500 796v4" stroke="#fff');

document.getElementById('plot').innerHTML = out;
```
